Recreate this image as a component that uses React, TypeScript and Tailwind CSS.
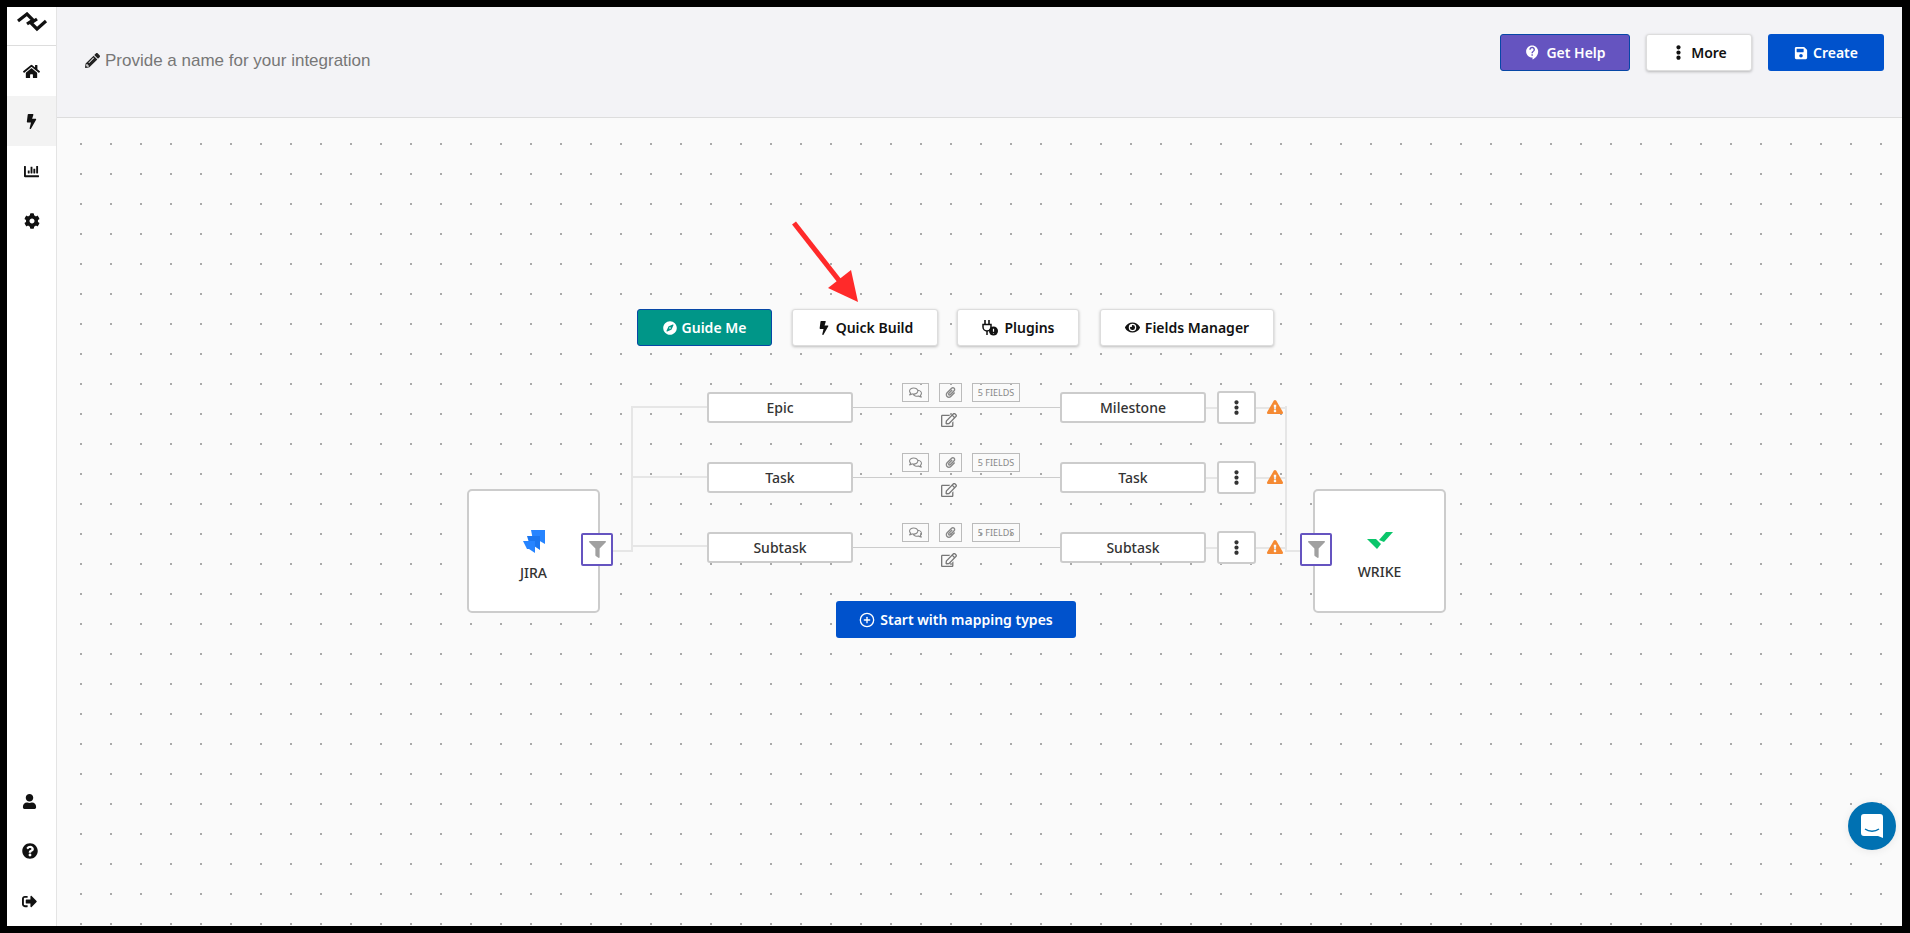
import type { ReactNode } from 'react';
import {
  FaBolt,
  FaChartBar,
  FaCog,
  FaCompass,
  FaEllipsisV,
  FaExclamationTriangle,
  FaEye,
  FaFilter,
  FaHome,
  FaPaperclip,
  FaPencilAlt,
  FaQuestionCircle,
  FaRegComments,
  FaRegEdit,
  FaSave,
  FaSignOutAlt,
  FaUser,
} from 'react-icons/fa';
import { FiPlusCircle } from 'react-icons/fi';
import { MdContactSupport } from 'react-icons/md';

const rows = [
  { source: 'Epic', target: 'Milestone' },
  { source: 'Task', target: 'Task' },
  { source: 'Subtask', target: 'Subtask' },
];

function Logo() {
  return (
    <svg width="32" height="20" viewBox="0 0 32 20" fill="none" stroke="#111" strokeWidth="3.2">
      <path d="M2 9 L11 2 L17 8 L11 12 M30 9 L21 17 L15 11 L21 7" />
    </svg>
  );
}

function PlugIcon() {
  return (
    <svg width="18" height="18" viewBox="0 0 18 18">
      <path d="M4 1v4M8 1v4" stroke="#111" strokeWidth="1.6" fill="none" />
      <path d="M2 5.5h8v2.5a4 4 0 0 1-8 0z" stroke="#111" strokeWidth="1.5" fill="none" />
      <path d="M6 12v4" stroke="#111" strokeWidth="1.5" />
      <circle cx="12.5" cy="12" r="4.5" fill="#111" />
      <path d="M12.5 9.8v3M12.5 14v.6" stroke="#fff" strokeWidth="1.2" />
    </svg>
  );
}

function JiraLogo() {
  return (
    <svg width="22" height="23" viewBox="0 0 22 23">
      <path d="M8 0h14v14l-7-4H10z" fill="#2684ff" />
      <path d="M4 6h13v14l-6-4H7z" fill="#1a76f0" />
      <path d="M0 11h12v12l-6-4H4z" fill="#2684ff" />
    </svg>
  );
}

function WrikeLogo() {
  return (
    <svg width="26" height="18" viewBox="0 0 26 18">
      <path d="M0 7h9l5 5-4 5z" fill="#0bc66b" />
      <path d="M12 8l7-8h7l-9 10z" fill="#0bc66b" />
    </svg>
  );
}

function SideIcon({ children, active }: { children: ReactNode; active?: boolean }) {
  return (
    <div className={active ? 'flex h-[50px] items-center justify-center bg-[#f3f3f3] text-[15px] text-[#111]' : 'flex h-[50px] items-center justify-center text-[15px] text-[#111]'}>
      {children}
    </div>
  );
}

function ToolButton({ children, className }: { children: ReactNode; className: string }) {
  return (
    <button className={`flex h-[37px] items-center justify-center gap-[5px] rounded-[3px] text-[14px] font-semibold ${className}`}>
      {children}
    </button>
  );
}

const whiteBtn = 'border border-[#ddd] bg-white text-[#111] shadow-[0_1px_3px_rgba(0,0,0,0.25)]';

function Filter({ className }: { className: string }) {
  return (
    <div className={`absolute flex h-[33px] w-[32px] items-center justify-center rounded-[2px] border-2 border-[#6554c0] bg-white text-[17px] text-[#a0a0a0] ${className}`}>
      <FaFilter />
    </div>
  );
}

function Row({ source, target }: { source: string; target: string }) {
  return (
    <div className="flex h-[31px] items-center">
      <div className="flex h-[31px] w-[146px] items-center justify-center rounded-[3px] border-2 border-[#ccc] bg-white text-[14px] font-medium text-[#333]">
        {source}
      </div>
      <div className="relative h-px w-[207px] bg-[#ccc]">
        <div className="absolute left-[49px] top-[-24px] flex h-[19px] w-[27px] items-center justify-center border border-[#bbb] text-[13px] text-[#888]">
          <FaRegComments />
        </div>
        <div className="absolute left-[86px] top-[-24px] flex h-[19px] w-[23px] items-center justify-center border border-[#bbb] text-[11px] text-[#888]">
          <FaPaperclip />
        </div>
        <div className="absolute left-[119px] top-[-24px] flex h-[19px] w-[48px] items-center justify-center border border-[#bbb] text-[9px] text-[#888]">
          5 FIELDS
        </div>
        <div className="absolute left-[88px] top-[5px] text-[16px] text-[#777]">
          <FaRegEdit />
        </div>
      </div>
      <div className="flex h-[31px] w-[146px] items-center justify-center rounded-[3px] border-2 border-[#ccc] bg-white text-[14px] font-medium text-[#333]">
        {target}
      </div>
      <div className="h-[2px] w-[11px] bg-[#e6e6e6]" />
      <div className="flex h-[33px] w-[39px] items-center justify-center rounded-[3px] border-2 border-[#ccc] bg-white text-[15px] text-[#333]">
        <FaEllipsisV />
      </div>
      <div className="relative h-[2px] w-[29px] bg-[#e6e6e6]">
        <FaExclamationTriangle className="absolute left-[11px] top-[-8px] text-[16px] text-[#f58a33]" />
      </div>
    </div>
  );
}

export default function App() {
  return (
    <div className="flex h-[933px] w-[1910px] bg-black p-[7px_8px_7px_7px] font-['Noto_Sans',sans-serif]">
      <aside className="flex w-[50px] shrink-0 flex-col border-r border-[#e4e4e4] bg-white shadow-[1px_0_3px_rgba(0,0,0,0.06)]">
        <div className="flex h-[39px] items-start justify-center border-b border-[#ddd] pt-[5px]">
          <Logo />
        </div>
        <div className="flex flex-col">
          <SideIcon><FaHome className="text-[17px]" /></SideIcon>
          <SideIcon active><FaBolt /></SideIcon>
          <SideIcon><FaChartBar /></SideIcon>
          <SideIcon><FaCog className="text-[16px]" /></SideIcon>
        </div>
        <div className="mt-auto flex flex-col pb-[-4px] pr-[4px]">
          <SideIcon><FaUser /></SideIcon>
          <SideIcon><FaQuestionCircle className="text-[16px]" /></SideIcon>
          <SideIcon><FaSignOutAlt /></SideIcon>
        </div>
      </aside>

      <main className="flex min-w-0 flex-1 flex-col">
        <header className="flex h-[111px] shrink-0 items-start justify-between border-b border-[#ddd] bg-[#f3f3f6] pl-[28px] pr-[18px] pt-[27px]">
          <div className="mt-[14px] flex items-center gap-[5px] font-['Liberation_Sans',sans-serif] text-[17px] text-[#777]">
            <FaPencilAlt className="text-[15px] text-[#222]" />
            <span>Provide a name for your integration</span>
          </div>
          <div className="flex gap-4">
            <ToolButton className="w-[130px] border border-[#0747a6] bg-[#6554c0] text-white">
              <MdContactSupport className="text-[17px]" /> Get Help
            </ToolButton>
            <ToolButton className={`w-[106px] ${whiteBtn}`}>
              <FaEllipsisV className="text-[15px]" /> More
            </ToolButton>
            <ToolButton className="w-[116px] bg-[#0052cc] text-white">
              <FaSave className="text-[14px]" /> Create
            </ToolButton>
          </div>
        </header>

        <section className="relative flex-1 overflow-hidden bg-[#fafafa] bg-[radial-gradient(circle,#aaa_1px,transparent_1.2px)] bg-[size:30px_30px] bg-[position:9px_11px] pt-[191px]">
          <div className="flex pl-[580px]">
            <ToolButton className="w-[135px] border border-[#0747a6] bg-[#009688] text-white">
              <FaCompass className="text-[14px]" /> Guide Me
            </ToolButton>
            <ToolButton className={`ml-[20px] w-[146px] ${whiteBtn}`}>
              <FaBolt className="text-[14px]" /> Quick Build
            </ToolButton>
            <ToolButton className={`ml-[19px] w-[122px] ${whiteBtn}`}>
              <PlugIcon /> Plugins
            </ToolButton>
            <ToolButton className={`ml-[21px] w-[174px] ${whiteBtn}`}>
              <FaEye className="text-[15px]" /> Fields Manager
            </ToolButton>
          </div>

          <div className="relative mt-[46px] pl-[650px]">
            <div className="flex flex-col gap-[39px]">
              {rows.map((r) => (
                <Row key={r.source} source={r.source} target={r.target} />
              ))}
            </div>
            <button className="ml-[129px] mt-[38px] flex h-[37px] w-[240px] items-center justify-center gap-[5px] rounded-[3px] bg-[#0052cc] text-[14px] font-semibold text-white">
              <FiPlusCircle className="text-[16px]" /> Start with mapping types
            </button>

            {/* left side connectors */}
            <div className="absolute left-[574px] top-[14px] h-[146px] w-[2px] bg-[#e6e6e6]" />
            <div className="absolute left-[574px] top-[14px] h-[2px] w-[76px] bg-[#e6e6e6]" />
            <div className="absolute left-[574px] top-[84px] h-[2px] w-[76px] bg-[#e6e6e6]" />
            <div className="absolute left-[574px] top-[153px] h-[2px] w-[76px] bg-[#e6e6e6]" />
            <div className="absolute left-[556px] top-[158px] h-[2px] w-[20px] bg-[#e6e6e6]" />

            {/* right side connector */}
            <div className="absolute left-[1228px] top-[14px] h-[146px] w-[2px] bg-[#e6e6e6]" />
            <div className="absolute left-[1228px] top-[158px] h-[2px] w-[16px] bg-[#e6e6e6]" />

            <div className="absolute left-[410px] top-[97px] flex h-[124px] w-[133px] flex-col items-center rounded-[5px] border-2 border-[#ccc] bg-white pt-[39px]">
              <JiraLogo />
              <span className="mt-[9px] text-[14px] font-medium text-[#333]">JIRA</span>
            </div>
            <Filter className="left-[524px] top-[141px]" />

            <div className="absolute left-[1256px] top-[97px] flex h-[124px] w-[133px] flex-col items-center rounded-[5px] border-2 border-[#ccc] bg-white pt-[41px]">
              <WrikeLogo />
              <span className="mt-[11px] text-[14px] font-medium text-[#333]">WRIKE</span>
            </div>
            <Filter className="left-[1243px] top-[141px]" />
          </div>

          {/* annotation arrow */}
          <svg className="absolute left-[730px] top-[100px]" width="80" height="90" viewBox="0 0 80 90">
            <path d="M7 5 L58 70" stroke="#ff2a2a" strokeWidth="5" />
            <path d="M71 84 L41 70 L64 52 z" fill="#ff2a2a" />
          </svg>

          <div className="absolute left-[1791px] top-[684px] flex h-[48px] w-[48px] items-center justify-center rounded-full bg-[#0071b2] shadow-[0_1px_8px_rgba(0,0,0,0.08)]">
            <svg width="22" height="24" viewBox="0 0 22 24">
              <path d="M3 0h16a3 3 0 0 1 3 3v21l-5-2H3a3 3 0 0 1-3-3V3a3 3 0 0 1 3-3z" fill="#fff" />
              <path d="M4 15c4 3 10 3 14 0" stroke="#0071b2" strokeWidth="1.4" fill="none" />
            </svg>
          </div>
        </section>
      </main>
    </div>
  );
}
